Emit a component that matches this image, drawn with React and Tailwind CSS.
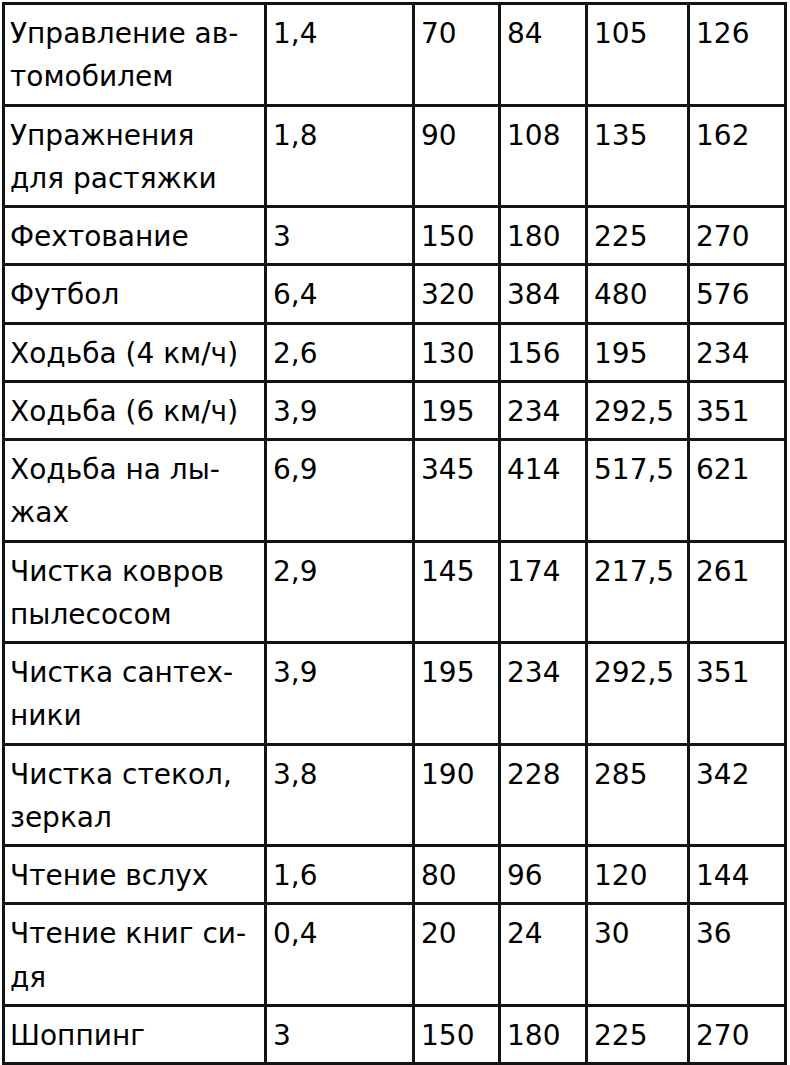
import React from "react";

// Таблица расхода калорий по видам активности.
// Первые два столбца — название и коэффициент, дальше — ккал для разных весов.

const rows = [
  [["Управление ав-", "томобилем"], "1,4", "70", "84", "105", "126"],
  [["Упражнения", "для растяжки"], "1,8", "90", "108", "135", "162"],
  [["Фехтование"], "3", "150", "180", "225", "270"],
  [["Футбол"], "6,4", "320", "384", "480", "576"],
  [["Ходьба (4 км/ч)"], "2,6", "130", "156", "195", "234"],
  [["Ходьба (6 км/ч)"], "3,9", "195", "234", "292,5", "351"],
  [["Ходьба на лы-", "жах"], "6,9", "345", "414", "517,5", "621"],
  [["Чистка ковров", "пылесосом"], "2,9", "145", "174", "217,5", "261"],
  [["Чистка сантех-", "ники"], "3,9", "195", "234", "292,5", "351"],
  [["Чистка стекол,", "зеркал"], "3,8", "190", "228", "285", "342"],
  [["Чтение вслух"], "1,6", "80", "96", "120", "144"],
  [["Чтение книг си-", "дя"], "0,4", "20", "24", "30", "36"],
  [["Шоппинг"], "3", "150", "180", "225", "270"],
];

const widths = ["w-[262px]", "w-[148px]", "w-[86px]", "w-[87px]", "w-[102px]", "w-[97px]"];

export default function App() {
  return (
    <div className="min-h-screen bg-white pl-[2px] pt-[2px]">
      <table
        className="table-fixed border-collapse border-[3px] border-[#141414] text-[28px] leading-[43.25px] text-black"
        style={{ fontFamily: '"DejaVu Sans", Verdana, sans-serif' }}
      >
        <colgroup>
          {widths.map((w) => (
            <col key={w} className={w} />
          ))}
        </colgroup>
        <tbody>
          {rows.map(([name, ...vals], i) => (
            <tr key={i}>
              <td className="border-[3px] border-[#141414] pl-[5px] pr-0 pt-[7px] pb-[5px] align-top whitespace-nowrap">
                {name.map((line, j) => (
                  <div key={j}>{line}</div>
                ))}
              </td>
              {vals.map((v, j) => (
                <td
                  key={j}
                  className="border-[3px] border-[#141414] pl-[6px] pr-0 pt-[7px] pb-[5px] align-top whitespace-nowrap"
                >
                  {v}
                </td>
              ))}
            </tr>
          ))}
        </tbody>
      </table>
    </div>
  );
}
